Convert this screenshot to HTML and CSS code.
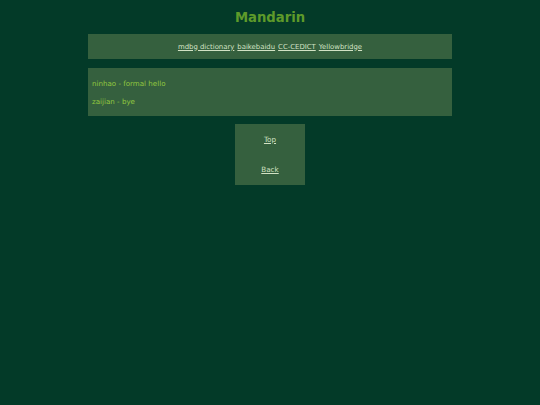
FILE: index.html
```html
<!DOCTYPE html>
<html>
<head>
<meta charset="utf-8">
<link rel="stylesheet" href="styles.css">
</head>
<body>
<h1 class="title">Mandarin</h1>
<div class="panel links">
<a href="#">mdbg dictionary</a> <a href="#">baikebaidu</a> <a href="#">CC-CEDICT</a> <a href="#">Yellowbridge</a>
</div>
<div class="panel words">
<p>ninhao - formal hello</p>
<p>zaijian - bye</p>
</div>
<div class="nav">
<a href="#">Top</a>
<a href="#">Back</a>
</div>
</body>
</html>
```
FILE: styles.css
```css
html, body {
  margin: 0;
  padding: 0;
  background: #033a28;
  font-family: "DejaVu Sans", Verdana, sans-serif;
  font-size: 7.2px;
  color: #92c83e;
}
.title {
  margin: 0;
  padding-top: 10px;
  height: 24px;
  text-align: center;
  font-size: 13.2px;
  font-weight: bold;
  color: #5e9a2a;
}
.panel {
  width: 364px;
  margin: 0 auto;
  background: #35603e;
}
.links {
  height: 25px;
  display: flex;
  align-items: center;
  justify-content: center;
  gap: 3px;
  font-size: 6.9px;
}
a {
  color: #d2e2c4;
  text-decoration: underline;
}
.words {
  margin-top: 9px;
  height: 48px;
  padding: 0 4px;
  box-sizing: border-box;
  display: flex;
  flex-direction: column;
  justify-content: center;
  gap: 9px;
  font-size: 7.1px;
}
.words p {
  margin: 0;
}
.nav {
  width: 70px;
  height: 61px;
  margin: 8px auto 0;
  background: #35603e;
  display: flex;
  flex-direction: column;
  align-items: center;
  justify-content: space-around;
}
```
